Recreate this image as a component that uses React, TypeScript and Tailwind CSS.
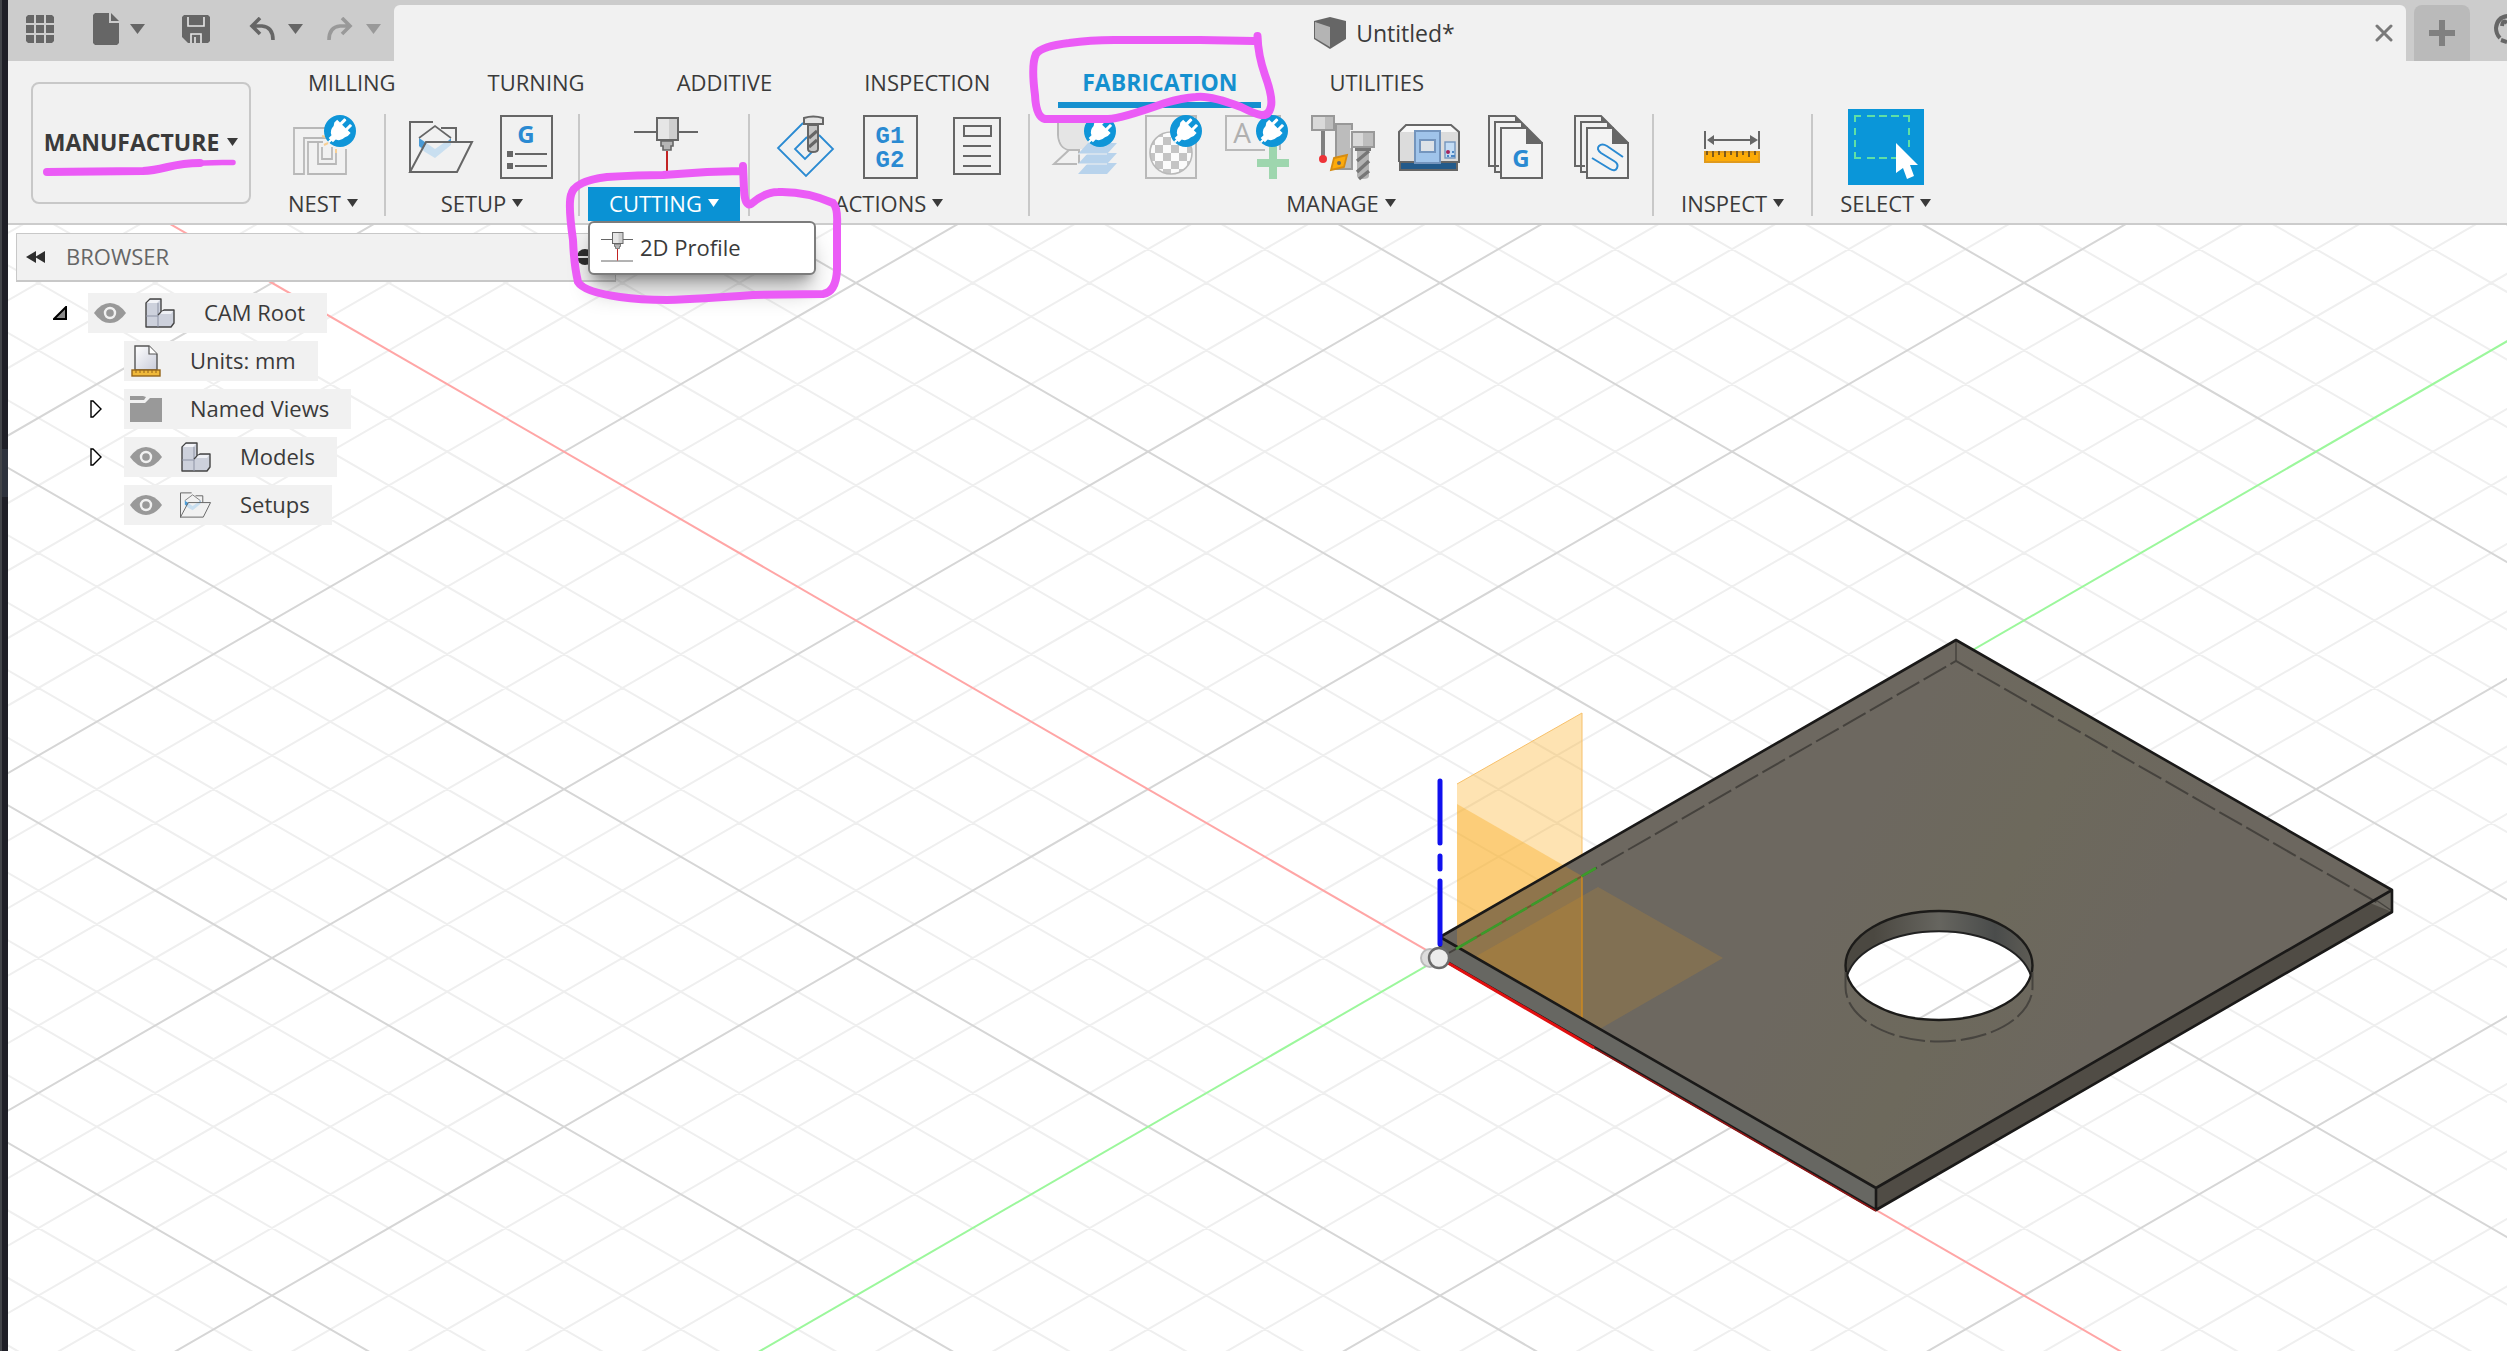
import React from "react";

type IconProps = { className?: string };

const DARK = "#666666";
const BLUE = "#2a8ad2";
const FONT = "[font-family:'Open_Sans','Noto_Sans',sans-serif]";

function Caret({ className = "" }: IconProps) {
  return (
    <svg viewBox="0 0 11 8" className={`h-2 w-[11px] shrink-0 fill-current ${className}`} aria-hidden="true">
      <path d="M0 0H11L5.5 8Z" />
    </svg>
  );
}

function BigCaret() {
  return (
    <svg viewBox="0 0 15 10" className="h-2.5 w-[15px] fill-current" aria-hidden="true">
      <path d="M0 0H15L7.5 10Z" />
    </svg>
  );
}

function Tool({ children }: { children: React.ReactNode }) {
  return (
    <svg viewBox="0 0 64 64" fill="none" className="h-16 w-16 overflow-visible" aria-hidden="true">
      {children}
    </svg>
  );
}

/* Round "extension" badge with a plug, drawn in the top right corner of locked tools. */
function PlugBadge() {
  return (
    <g transform="translate(49 16) rotate(45)">
      <circle r="16" fill="#0f95d8" />
      <path d="M-6 -12Q-4 -13 -3 -12V-6H2V-12Q4 -13 5 -12V-6H9V-2L8 1Q8 7 3 9V13H-3V9Q-8 7 -8 1L-10 -2V-6H-6Z" fill="#fff" />
      <path d="M-1 12H1V16H-1Z" fill="#fff" />
    </g>
  );
}

function NestIcon() {
  return (
    <Tool>
      <g stroke="#b8b8b8" strokeWidth="1.8">
        <path d="M36 13H3V59H13V23H36" />
        <path d="M32 27H17V59H55V34" />
        <path d="M27 27V49H45V35" />
        <path d="M31 32V44H41V32" />
      </g>
      <path d="M31 21L35 22M33 30L37 28M45 34V38" stroke="#f8cf94" strokeWidth="2" />
      <PlugBadge />
    </Tool>
  );
}

function SetupFolder() {
  return (
    <g>
      <path d="M12 23V32L18 37L28 43L44 30V23L28 34Z" fill="#c9dff0" />
      <path d="M12 22V31L16 34L20 27ZM44 23V27H38Z" fill="#4a9bd6" />
      <path d="M12 23L28 11L44 23L40 27H18Z" fill="#f1f1f1" />
      <path d="M12 23L28 11L44 23" stroke={DARK} strokeWidth="1.6" />
      <path d="M3 58V7H26M34 13H49V27" stroke={DARK} strokeWidth="2" />
      <path d="M19 27H65L50 57H3Z" stroke={DARK} strokeWidth="2" />
    </g>
  );
}

function NcSheetIcon() {
  return (
    <Tool>
      <rect x="8" y="1" width="51" height="62" stroke={DARK} strokeWidth="2" />
      <text x="33" y="28" textAnchor="middle" fontSize="24" fontWeight="700" fill={BLUE}>G</text>
      <path d="M14 36H20V42H14ZM14 48H20V54H14Z" fill={DARK} />
      <path d="M22 39H54M22 51H54" stroke={DARK} strokeWidth="2" />
    </Tool>
  );
}

function LaserShape() {
  return (
    <g>
      <path d="M2 17H24M46 17H66M2 60H66" stroke={DARK} strokeWidth="2" />
      <path d="M35 36V59" stroke="#c22323" strokeWidth="2" />
      <rect x="25" y="3" width="21" height="22" fill="#e6e6e6" />
      <rect x="37" y="3" width="9" height="22" fill="#cfcfcf" />
      <rect x="25" y="3" width="21" height="22" stroke={DARK} strokeWidth="2" />
      <path d="M29 26H41V31H39V35H31V31H29Z" fill="#b5b5b5" stroke={DARK} strokeWidth="1.6" />
    </g>
  );
}

function SimulateIcon() {
  return (
    <Tool>
      <path d="M32 8L7 33L35 61L62 34L48 20" stroke={BLUE} strokeWidth="1.8" />
      <path d="M36 22L24 34L34 44L44 34" stroke={BLUE} strokeWidth="1.8" />
      <path d="M37 10H47V34Q47 37 42 37Q37 37 37 34Z" fill="#c4c4c4" stroke={DARK} strokeWidth="2" />
      <path d="M38 23L46 16M38 32L46 25" stroke={DARK} strokeWidth="3" />
      <path d="M33 3Q42 0 52 3V9H33Z" fill="#e4e4e4" stroke={DARK} strokeWidth="2" />
    </Tool>
  );
}

function PostProcessIcon() {
  return (
    <Tool>
      <rect x="7" y="1" width="53" height="62" stroke={DARK} strokeWidth="2" />
      <g className="[font-family:'Liberation_Mono',monospace]" fontSize="24" fontWeight="700" fill={BLUE} textAnchor="middle">
        <text x="33" y="28">G1</text>
        <text x="33" y="52">G2</text>
      </g>
    </Tool>
  );
}

function SetupSheetIcon() {
  return (
    <Tool>
      <rect x="11" y="3" width="46" height="56" stroke={DARK} strokeWidth="2" />
      <rect x="21" y="11" width="27" height="10" stroke={DARK} strokeWidth="2" />
      <path d="M20 31H48M20 41H48M20 51H48" stroke={DARK} strokeWidth="2" />
    </Tool>
  );
}

function MaterialsIcon() {
  return (
    <Tool>
      <path d="M7 1V20Q8 33 18 35H28V49M7 1H50M18 35L3 49H26" stroke="#b9b9b9" strokeWidth="2" />
      <path d="M8 2V20Q9 33 18 34H37V2Z" fill="#e5e5e5" />
      <path d="M37 28H66L56 39H27ZM37 38H66L56 49H27ZM37 48H66L56 59H27Z" fill="#b8d3ec" />
      <path d="M27 39H56M27 49H56" stroke="#f1f1f1" strokeWidth="1" />
      <PlugBadge />
    </Tool>
  );
}

function AppearanceIcon() {
  const cells: React.ReactNode[] = [];
  for (let r = 0; r < 6; r++) {
    for (let c = 0; c < 6; c++) {
      if ((r + c) % 2 === 1) {
        cells.push(<rect key={`${r}-${c}`} x={10 + c * 8} y={14 + r * 8} width="8" height="8" fill="#c4c4c4" />);
      }
    }
  }
  return (
    <Tool>
      <rect x="9" y="1" width="50" height="62" stroke="#b9b9b9" strokeWidth="2" />
      <clipPath id="checker-ball"><circle cx="34" cy="38" r="21" /></clipPath>
      <circle cx="34" cy="38" r="21" fill="#fbfbfb" />
      <g clipPath="url(#checker-ball)">{cells}</g>
      <circle cx="34" cy="38" r="21" stroke="#b9b9b9" strokeWidth="1.6" />
      <PlugBadge />
    </Tool>
  );
}

function AddLabelIcon() {
  return (
    <Tool>
      <path d="M42 35H3V1H57V35" stroke="#b9b9b9" strokeWidth="2" />
      <text x="19" y="28" textAnchor="middle" fontSize="28" fill="#b0b0b0">A</text>
      <path d="M46 30H54V44H66V52H54V64H46V52H34V44H46Z" fill="#9ed6ae" />
      <PlugBadge />
    </Tool>
  );
}

function ToolLibraryIcon() {
  return (
    <Tool>
      <rect x="27" y="9" width="16" height="45" fill="#bcbcbc" stroke="#989898" strokeWidth="2" />
      <rect x="12" y="16" width="4" height="25" fill="#808080" />
      <rect x="3" y="1" width="22" height="14" fill="#d9d9d9" />
      <rect x="16" y="1" width="9" height="14" fill="#bdbdbd" />
      <rect x="3" y="1" width="22" height="14" stroke="#999" strokeWidth="2" />
      <circle cx="14" cy="44" r="4" fill="#ee3338" />
      <path d="M25 43L38 40L35 52L22 55Z" fill="#fcaa0b" stroke="#d58b12" strokeWidth="1.8" />
      <circle cx="30" cy="48" r="2" fill={DARK} />
      <path d="M48 36H60V61Q60 64 54 64Q48 64 48 61Z" fill="#b3b3b3" />
      <path d="M48 46L60 36M48 57L60 46M50 64L60 56" stroke="#777" strokeWidth="3.4" />
      <rect x="46" y="32" width="16" height="4" fill="#777" />
      <rect x="41" y="15" width="26" height="18" fill="#f1f1f1" />
      <rect x="43" y="17" width="22" height="15" fill="#d9d9d9" />
      <rect x="54" y="17" width="11" height="15" fill="#bdbdbd" />
      <rect x="43" y="17" width="22" height="15" stroke="#999" strokeWidth="2" />
    </Tool>
  );
}

function MachineIcon() {
  return (
    <Tool>
      <path d="M3 17L10 10H57L64 17V47H3Z" fill="#f8f8f8" />
      <path d="M3 17H64V47H3Z" fill="#dcdcdc" />
      <rect x="5" y="47" width="57" height="8" fill="#235a8a" stroke={DARK} strokeWidth="2" />
      <path d="M4 47V17L11 10H56L64 17V47H60" stroke={DARK} strokeWidth="2" />
      <rect x="20" y="16" width="25" height="32" fill="#a0c4ea" stroke="#7495bd" strokeWidth="2" />
      <rect x="25" y="25" width="15" height="12" fill="#dde2e7" stroke="#7495bd" strokeWidth="2" />
      <rect x="50" y="27" width="10" height="16" fill="#c3dcf5" stroke="#7495bd" strokeWidth="1.4" />
      <circle cx="53" cy="37" r="2" fill="#a5235c" />
      <path d="M57 36H59V38H57ZM52 40H54V42H52ZM56 40H60V42H56Z" fill="#4a86c6" />
    </Tool>
  );
}

function PageStack({ children }: { children: React.ReactNode }) {
  return (
    <Tool>
      <path d="M18 51H8V1H34L61 28" stroke={DARK} strokeWidth="2" />
      <path d="M20 57H14V7H40" stroke={DARK} strokeWidth="2" />
      <path d="M34 1V7H40V13H46V28H61Z" fill={DARK} />
      <path d="M20 13H46V28H61V63H20Z" fill="#f3f3f3" stroke={DARK} strokeWidth="2" />
      {children}
    </Tool>
  );
}

function MeasureIcon() {
  return (
    <Tool>
      <path d="M4 16V34M58 16V34M10 25H52" stroke={DARK} strokeWidth="2" />
      <path d="M6 25L13 20V30ZM57 25L49 20V30Z" fill={DARK} />
      <rect x="4" y="37" width="54" height="10" fill="#fcab07" stroke="#e09a1c" strokeWidth="2" />
      <path d="M6 36V40M12 36V42M18 36V40M24 36V42M30 36V40M36 36V42M42 36V40M48 36V42M54 36V40" stroke="#7d5a1c" strokeWidth="2" />
    </Tool>
  );
}

function SelectIcon() {
  return (
    <Tool>
      <path d="M1 7V1H7M13 1H21M25 1H33M37 1H45M49 1H55V7M55 13V20M55 25V32M1 13V20M1 25V32M1 37V43H7M13 43H21M25 43H33M37 43H42" stroke="#5fe0a5" strokeWidth="2" />
      <path d="M42 28L64 50H56L60 61L53 64L49 53L42 58Z" fill="#fff" />
    </Tool>
  );
}

function Group({
  label,
  icons,
  pad = "px-[21px]",
  active = false,
  last = false,
  selected = false,
  children,
}: {
  label: string;
  icons: React.ReactNode[];
  pad?: string;
  active?: boolean;
  last?: boolean;
  selected?: boolean;
  children?: React.ReactNode;
}) {
  return (
    <div className="relative flex shrink-0">
      <div className={`flex flex-col items-center ${pad}`}>
        <div className="flex gap-[22px]">
          {icons.map((icon, i) => (
            <button
              key={i}
              type="button"
              aria-label={`${label} tool ${i + 1}`}
              className={selected ? "-mx-1.5 bg-[#0a96d9] p-1.5" : "py-1.5"}
            >
              {icon}
            </button>
          ))}
        </div>
        <button
          type="button"
          className={`mt-[2px] flex h-[34px] items-center justify-center gap-1.5 pb-0.5 text-[22px] font-medium leading-8 ${
            active ? "w-[152px] bg-[#0a92d4] text-white" : "text-[#3a3a3a]"
          }`}
        >
          {label}
          <Caret />
        </button>
        {children}
      </div>
      {!last && <div className="mt-[5px] h-[102px] w-0.5 bg-[#c8c8c8]" />}
    </div>
  );
}

const TABS = ["MILLING", "TURNING", "ADDITIVE", "INSPECTION", "FABRICATION", "UTILITIES"];

function TitleBar() {
  return (
    <header className="flex h-[61px] shrink-0 bg-[#cccccc] text-[#666]">
      <div className="flex h-[58px] w-[386px] shrink-0 items-center pl-[18px]">
        <button type="button" aria-label="Data panel">
          <svg viewBox="0 0 28 28" className="h-7 w-7 fill-current">
            <path d="M2 0H8V8H0V2ZM10 0H18V8H10ZM20 0H26L28 2V8H20ZM0 10H8V18H0ZM10 10H18V18H10ZM20 10H28V18H20ZM0 20H8V28H2L0 26ZM10 20H18V28H10ZM20 20H28V26L26 28H20Z" />
          </svg>
        </button>
        <button type="button" aria-label="File" className="ml-[39px] flex items-center gap-[11px]">
          <svg viewBox="0 0 26 32" className="h-8 w-[26px] fill-current">
            <path d="M2 0H16V10H26V30L24 32H2L0 30V2ZM18 0L26 8H18Z" />
          </svg>
          <BigCaret />
        </button>
        <button type="button" aria-label="Save" className="ml-[37px]">
          <svg viewBox="0 0 28 28" className="h-7 w-7">
            <path d="M2 0H26L28 2V26L26 28H6L0 22V2Z" fill="#666" />
            <path d="M6 2V11H22V2M9 28V19H19V28" fill="none" stroke="#e6e6e6" strokeWidth="1.6" />
            <path d="M13 22V28" stroke="#e6e6e6" strokeWidth="1.6" />
          </svg>
        </button>
        <button type="button" aria-label="Undo" className="ml-[39px] flex items-center gap-[13px]">
          <svg viewBox="0 0 26 24" className="h-6 w-[26px]" fill="none" stroke="#666" strokeWidth="3.6">
            <path d="M11 1L3 9L11 17M3 9H13Q24 10 24 23" />
          </svg>
          <BigCaret />
        </button>
        <button type="button" aria-label="Redo" className="ml-6 flex items-center gap-[13px] text-[#999]">
          <svg viewBox="0 0 26 24" className="h-6 w-[26px]" fill="none" stroke="#999" strokeWidth="3.6">
            <path d="M15 1L23 9L15 17M23 9H13Q2 10 2 23" />
          </svg>
          <BigCaret />
        </button>
      </div>
      <div className="mt-[5px] flex min-w-0 flex-1 items-center rounded-t-md bg-[#f1f1f1]">
        <div className="flex flex-1 items-center justify-center gap-2.5 text-[23px] font-medium text-[#3a3a3a]">
          <svg viewBox="0 0 32 32" className="h-8 w-8" aria-hidden="true">
            <path d="M0 4L16 0L32 4V22L16 32L0 22Z" fill={DARK} />
            <path d="M1 5L16 10V30L1 21Z" fill="#b4b4b4" />
          </svg>
          <span>Untitled*</span>
        </div>
        <button type="button" aria-label="Close" className="mr-[13px]">
          <svg viewBox="0 0 18 18" className="h-[18px] w-[18px]" stroke="#7a7a7a" strokeWidth="3" strokeLinecap="round">
            <path d="M2 2L16 16M16 2L2 16" />
          </svg>
        </button>
      </div>
      <button type="button" aria-label="New tab" className="ml-2 mt-[5px] flex w-14 items-center justify-center rounded-t-lg bg-[#bababa]">
        <svg viewBox="0 0 26 26" className="h-[26px] w-[26px]" fill="#808080">
          <path d="M10 0H16V10H26V16H16V26H10V16H0V10H10Z" />
        </svg>
      </button>
      <div className="flex w-[37px] justify-end overflow-hidden">
        <svg viewBox="0 0 13 32" className="mt-[13px] h-8 w-[13px]" fill="none" stroke="#666" strokeWidth="4">
          <path d="M14 3Q3 4 2 15Q2 21 6 25M13 10Q9 6 8 13" />
          <path d="M13 29L7 27" />
        </svg>
      </div>
    </header>
  );
}

function Ribbon() {
  return (
    <section className="relative z-20 flex h-[164px] shrink-0 border-b-2 border-[#cccccc] bg-[#f1f1f1] pl-[23px]">
      <button
        type="button"
        className="mt-[21px] flex h-[122px] w-[220px] shrink-0 items-center justify-center gap-2 rounded-lg border-2 border-[#c8c8c8] pb-0.5 text-[23px] font-bold text-[#3a3a3a]"
      >
        MANUFACTURE
        <Caret />
      </button>
      <div className="ml-[11px] flex min-w-0 flex-1 flex-col">
        <nav className="flex h-12 pl-[22px]" role="tablist">
          <div className="flex gap-11">
            {TABS.map((t) => {
              const on = t === "FABRICATION";
              return (
                <button
                  key={t}
                  type="button"
                  role="tab"
                  aria-selected={on}
                  className={`flex h-[47px] flex-col items-center justify-between px-6 leading-[43px] ${
                    on ? "border-b-[6px] border-[#1590cf] text-[23px] font-bold text-[#1590cf]" : "text-[22px] font-medium text-[#3a3a3a]"
                  }`}
                >
                  {t}
                </button>
              );
            })}
          </div>
        </nav>
        <div className="flex">
          <Group label="NEST" pad="px-[26px]" icons={[<NestIcon key="n" />]} />
          <Group label="SETUP" icons={[<Tool key="a"><SetupFolder /></Tool>, <NcSheetIcon key="b" />]} />
          <Group label="CUTTING" pad="px-2" active icons={[<Tool key="a"><LaserShape /></Tool>]}>
            <div
              role="menu"
              className="absolute left-2 top-28 flex h-[54px] w-[228px] items-center rounded-md border-2 border-[#7c7c7c] bg-white pb-0.5 pl-2.5 shadow-xl shadow-black/30"
            >
              <button type="button" role="menuitem" className="flex items-center gap-1.5 text-[22px] font-medium text-[#3a3a3a]">
                <svg viewBox="0 0 68 64" fill="none" className="h-8 w-[34px]" aria-hidden="true">
                  <LaserShape />
                </svg>
                2D Profile
              </button>
            </div>
          </Group>
          <Group label="ACTIONS" icons={[<SimulateIcon key="a" />, <PostProcessIcon key="b" />, <SetupSheetIcon key="c" />]} />
          <Group
            label="MANAGE"
            icons={[
              <MaterialsIcon key="a" />,
              <AppearanceIcon key="b" />,
              <AddLabelIcon key="c" />,
              <ToolLibraryIcon key="d" />,
              <MachineIcon key="e" />,
              <PageStack key="f">
                <text x="40" y="52" textAnchor="middle" fontSize="24" fontWeight="700" fill={BLUE}>G</text>
              </PageStack>,
              <PageStack key="g">
                <path d="M25 43L43 54Q48 57 50 53Q52 49 47 46L34 38Q29 34 32 31Q35 28 40 31L56 42" stroke={BLUE} strokeWidth="2" />
              </PageStack>,
            ]}
          />
          <Group label="INSPECT" pad="px-[27px]" icons={[<MeasureIcon key="a" />]} />
          <Group label="SELECT" pad="px-[27px]" last selected icons={[<SelectIcon key="a" />]} />
        </div>
      </div>
    </section>
  );
}

function Eye() {
  return (
    <svg viewBox="0 0 32 20" className="h-5 w-8" aria-label="Visible">
      <path d="M0 10Q7 0 16 0T32 10Q25 20 16 20T0 10Z" fill="#999" />
      <circle cx="16" cy="10" r="5" fill="#999" stroke="#f1f1f1" strokeWidth="2.4" />
    </svg>
  );
}

function ComponentIcon() {
  return (
    <svg viewBox="0 0 32 32" className="h-8 w-8" aria-hidden="true">
      <path d="M2 6L6 2H17V15L20 13H30V26L27 30H2Z" fill="#cdd1dc" stroke="#444" strokeWidth="1.4" strokeLinejoin="round" />
      <path d="M3 6L6 3H16L13 6Z" fill="#f3f4f8" />
      <path d="M14 17L19 14H29L27 17Z" fill="#eef0f5" />
      <path d="M2 19H14M14 6V30" stroke="#8d93a5" strokeWidth="1" />
      <path d="M17 15L14 18" stroke="#444" strokeWidth="1.2" />
    </svg>
  );
}

function UnitsIcon() {
  return (
    <svg viewBox="0 0 32 32" className="h-8 w-8" aria-hidden="true">
      <defs>
        <linearGradient id="sheet" x1="0" y1="0" x2="1" y2="1">
          <stop offset="0" stopColor="#fff" />
          <stop offset="1" stopColor="#c9ccda" />
        </linearGradient>
      </defs>
      <path d="M5 25V1H19L27 9V25Z" fill="url(#sheet)" stroke="#555" strokeWidth="1.4" />
      <path d="M19 1V9H27" fill="#fff" stroke="#555" strokeWidth="1.2" />
      <rect x="2" y="25" width="28" height="6" fill="#f0b93a" stroke="#95651a" strokeWidth="1.4" />
      <path d="M6 25V28M10 25V28M14 25V28M18 25V28M22 25V28M26 25V28" stroke="#95651a" />
    </svg>
  );
}

function FolderIcon() {
  return (
    <svg viewBox="0 0 32 26" className="h-[26px] w-8 fill-[#999]" aria-hidden="true">
      <path d="M0 0H13L16 1L14 4H0ZM0 7H15L20 2H32V26H0Z" />
    </svg>
  );
}

function TreeRow({
  indent,
  twisty,
  icons,
  label,
}: {
  indent: string;
  twisty?: "open" | "closed";
  icons: React.ReactNode[];
  label: string;
}) {
  return (
    <li className="flex h-10 items-center">
      <div className={`flex shrink-0 justify-end ${indent}`}>
        {twisty === "open" && (
          <button type="button" aria-label={`Collapse ${label}`} className="mr-[21px]">
            <svg viewBox="0 0 14 14" className="h-3.5 w-3.5">
              <path d="M13 1V13H1Z" fill="#8a8a8a" stroke="#000" strokeWidth="2" />
            </svg>
          </button>
        )}
        {twisty === "closed" && (
          <button type="button" aria-label={`Expand ${label}`} className="mr-[22px]">
            <svg viewBox="0 0 12 18" className="h-[18px] w-3">
              <path d="M1 1H3L11 9L3 17H1Z" fill="#fff" stroke="#000" strokeWidth="1.4" />
            </svg>
          </button>
        )}
      </div>
      <div className="flex h-10 items-center bg-[#f1f1f1] pl-1.5 pr-[22px]">
        <div className="flex items-center gap-[18px]">{icons.map((i, n) => <span key={n}>{i}</span>)}</div>
        <span className="ml-7 pb-0.5 text-[22px] font-medium leading-9 text-[#3a3a3a]">{label}</span>
      </div>
    </li>
  );
}

function BrowserPanel() {
  return (
    <aside className="relative z-10 ml-2 w-[600px] pt-2">
      <div className="flex h-[49px] items-center border border-b-2 border-[#c8c8c8] bg-[#f1f1f1] pl-[9px] pr-[22px]">
        <button type="button" aria-label="Collapse browser">
          <svg viewBox="0 0 20 12" className="h-3 w-5 fill-[#2e2e2e]">
            <path d="M0 6L10 0V12ZM9 6L19 0V12Z" />
          </svg>
        </button>
        <h2 className="ml-5 flex-1 pb-0.5 text-[22px] font-medium text-[#666]">BROWSER</h2>
        <button type="button" aria-label="Display settings" className="h-4 w-4 rounded-full bg-[#2e2e2e]">
          <span className="block h-0.5 w-4 bg-[#ddd]" />
        </button>
      </div>
      <ul className="mt-[11px] flex flex-col gap-2">
        <TreeRow indent="w-[72px]" twisty="open" icons={[<Eye key="e" />, <ComponentIcon key="c" />]} label="CAM Root" />
        <TreeRow indent="w-[108px]" icons={[<UnitsIcon key="u" />]} label="Units: mm" />
        <TreeRow indent="w-[108px]" twisty="closed" icons={[<FolderIcon key="f" />]} label="Named Views" />
        <TreeRow indent="w-[108px]" twisty="closed" icons={[<Eye key="e" />, <ComponentIcon key="c" />]} label="Models" />
        <TreeRow
          indent="w-[108px]"
          icons={[
            <Eye key="e" />,
            <svg key="s" viewBox="2 2 66 60" fill="none" className="h-8 w-8"><SetupFolder /></svg>,
          ]}
          label="Setups"
        />
      </ul>
    </aside>
  );
}

/* Isometric ground grid: one minor step is MINOR px wide, every fifth line is a major one. */
const OX = 1440;
const OY = 958;
const MINOR = 116.8;
const SLOPE = 0.578;

function gridPath(major: boolean) {
  let d = "";
  for (let k = -40; k <= 40; k++) {
    if (k === 0 || (k % 5 === 0) !== major) continue;
    const x = OX + k * MINOR;
    d += `M${x - 3000} ${OY - 3000 * SLOPE}L${x + 3000} ${OY + 3000 * SLOPE}`;
    d += `M${x - 3000} ${OY + 3000 * SLOPE}L${x + 3000} ${OY - 3000 * SLOPE}`;
  }
  return d;
}

function Scene() {
  return (
    <svg viewBox="8 225 2499 1126" preserveAspectRatio="xMinYMin slice" className="absolute inset-0 h-full w-full" fill="none" aria-label="Model view">
      <defs>
        <linearGradient id="plate" gradientUnits="userSpaceOnUse" x1="1640" y1="780" x2="2190" y2="1060">
          <stop offset="0" stopColor="#6d6860" />
          <stop offset="0.35" stopColor="#6d6860" />
          <stop offset="0.6" stopColor="#6d695c" />
          <stop offset="0.85" stopColor="#6c675f" />
        </linearGradient>
        <linearGradient id="bore" x1="0" y1="0" x2="1" y2="0">
          <stop offset="0" stopColor="#4b4841" />
          <stop offset="0.15" stopColor="#4b4841" />
          <stop offset="0.5" stopColor="#66655f" />
          <stop offset="0.8" stopColor="#4a4c4b" />
          <stop offset="1" stopColor="#5e5c55" />
        </linearGradient>
        <clipPath id="top-face"><path d="M1440 937L1956 640L2392 890L1876 1188Z" /></clipPath>
      </defs>
      <path d={gridPath(false)} stroke="#efefef" strokeWidth="2" />
      <path d={gridPath(true)} stroke="#d6d6d6" strokeWidth="2" />
      <path d={`M${OX - 3000} ${OY - 3000 * SLOPE}L${OX + 3000} ${OY + 3000 * SLOPE}`} stroke="#ffa6a6" strokeWidth="2" />
      <path d={`M${OX - 3000} ${OY + 3000 * SLOPE}L${OX + 3000} ${OY - 3000 * SLOPE}`} stroke="#9cf79c" strokeWidth="2" />

      <path d="M1457 784L1582 713V858L1457 929Z" fill="#fbac1c" fillOpacity="0.34" />
      <path d="M1457 804L1582 876V1019L1457 947Z" fill="#fbac1c" fillOpacity="0.38" />
      <path d="M1457 784L1582 713V858" stroke="#f7c06a" strokeWidth="1" />

      <path
        fillRule="evenodd"
        d="M1440 937L1956 640L2392 890L1876 1188ZM1845.500 965.500A93.500 54.500 0 0 1 2032.500 965.500A93.500 54.500 0 0 1 1845.500 965.500Z"
        fill="url(#plate)"
      />
      <path d="M1440 937L1876 1188V1210L1440 958Z" fill="#676762" />
      <path d="M1876 1188L2392 890V912L1876 1210Z" fill="#504c45" />
      <path d="M2370 903L2392 890V912Z" fill="#6b6860" />
      <path
        d="M1847 976A93.500 54.500 0 0 1 1845.500 965.500A93.500 54.500 0 0 1 2032.500 965.500A93.500 54.500 0 0 1 2031 976A93.500 54.500 0 0 0 1847 976Z"
        fill="url(#bore)"
      />
      <path d="M1847 976A93.500 54.500 0 0 1 2031 976" stroke="#222" strokeWidth="2" />
      <ellipse cx="1939" cy="965.5" rx="93.5" ry="54.5" stroke="#1c1b19" strokeWidth="2.4" />
      <path d="M1845.500 972V987A93.500 54.500 0 0 0 2032.500 987V972" stroke="#47443f" strokeWidth="2" strokeDasharray="26 5" />
      <path d="M1440 958L1956 661L2378 903" stroke="#45423d" strokeWidth="2" strokeDasharray="26 5" />
      <path d="M1956 640V661M2376 900L2392 911" stroke="#45423d" strokeWidth="1.4" />

      <g clipPath="url(#top-face)" fill="#fb9e0c">
        <path d="M1457 804L1582 876V1019L1457 947Z" fillOpacity="0.24" />
        <path d="M1598 887L1723 958L1598 1030L1473 958Z" fillOpacity="0.15" />
        <path d="M1582 876V1019" stroke="#d08a1e" strokeWidth="1.4" />
      </g>
      <path d="M1440 937L1956 640L2392 890V912L1876 1210L1440 958ZM1440 937L1876 1188L2392 890M1876 1188V1210" stroke="#1a1918" strokeWidth="2.6" strokeLinejoin="round" />
      <path d="M1456 949L1596 868" stroke="#3c9a2a" strokeWidth="2.6" strokeDasharray="24 5" />
      <path d="M1448 963L1594 1048" stroke="#e01010" strokeWidth="3" />
      <path d="M1594 1048L1876 1211" stroke="#8c1616" strokeWidth="1.6" />
      <path d="M1440 781V843M1440 856V869M1440 881V944" stroke="#1010ef" strokeWidth="5" strokeLinecap="round" />
      <circle cx="1430" cy="958" r="9" fill="#ddd" stroke="#bbb" strokeWidth="2" />
      <circle cx="1439" cy="958" r="10" fill="#ececec" stroke="#6b6b6b" strokeWidth="2.4" />
    </svg>
  );
}

/* Freehand marker strokes laid over the window. */
function Ink() {
  return (
    <svg
      viewBox="0 0 1300 320"
      className="pointer-events-none absolute left-0 top-0 z-30 h-[320px] w-[1300px]"
      fill="none"
      stroke="#eb5bf6"
      strokeWidth="8"
      strokeLinecap="round"
      strokeLinejoin="round"
      aria-hidden="true"
    >
      <path d="M47 172L143 171C165 170 172 163 200 163" />
      <path d="M190 164Q205 162 233 162.500" strokeWidth="5.500" />
      <path d="M743 166L744 190Q745 207 751 204Q765 192 778 192Q806 191 833 203Q838 208 837 225V270Q836 292 823 294L753 295Q700 299 667 300Q640 300 620 297Q584 292 578 282Q574 265 573 240Q568 205 571 195Q574 181 607 177Q640 175 663 175L707 172L741 171" />
      <path d="M1257.500 36Q1258 55 1265 75Q1273 97 1271 106Q1269 116 1261 115Q1255 114 1241 107Q1210 95 1196 97Q1182 98 1165 103Q1120 119 1108 119H1045Q1036 117 1035 95Q1031 65 1036 54Q1042 46 1069 43Q1090 40 1114 40H1200L1254 41" />
    </svg>
  );
}

export default function App() {
  return (
    <div className={`relative flex min-h-screen overflow-hidden bg-white ${FONT}`}>
      <div className="flex w-2 shrink-0 flex-col border-l-2 border-[#43454a] bg-[#1f1f27] pt-[449px]">
        <div className="h-12 bg-[#2e323d]" />
      </div>
      <div className="flex min-w-0 flex-1 flex-col">
        <TitleBar />
        <Ribbon />
        <main className="relative flex-1 overflow-hidden">
          <Scene />
          <BrowserPanel />
        </main>
      </div>
      <Ink />
    </div>
  );
}
